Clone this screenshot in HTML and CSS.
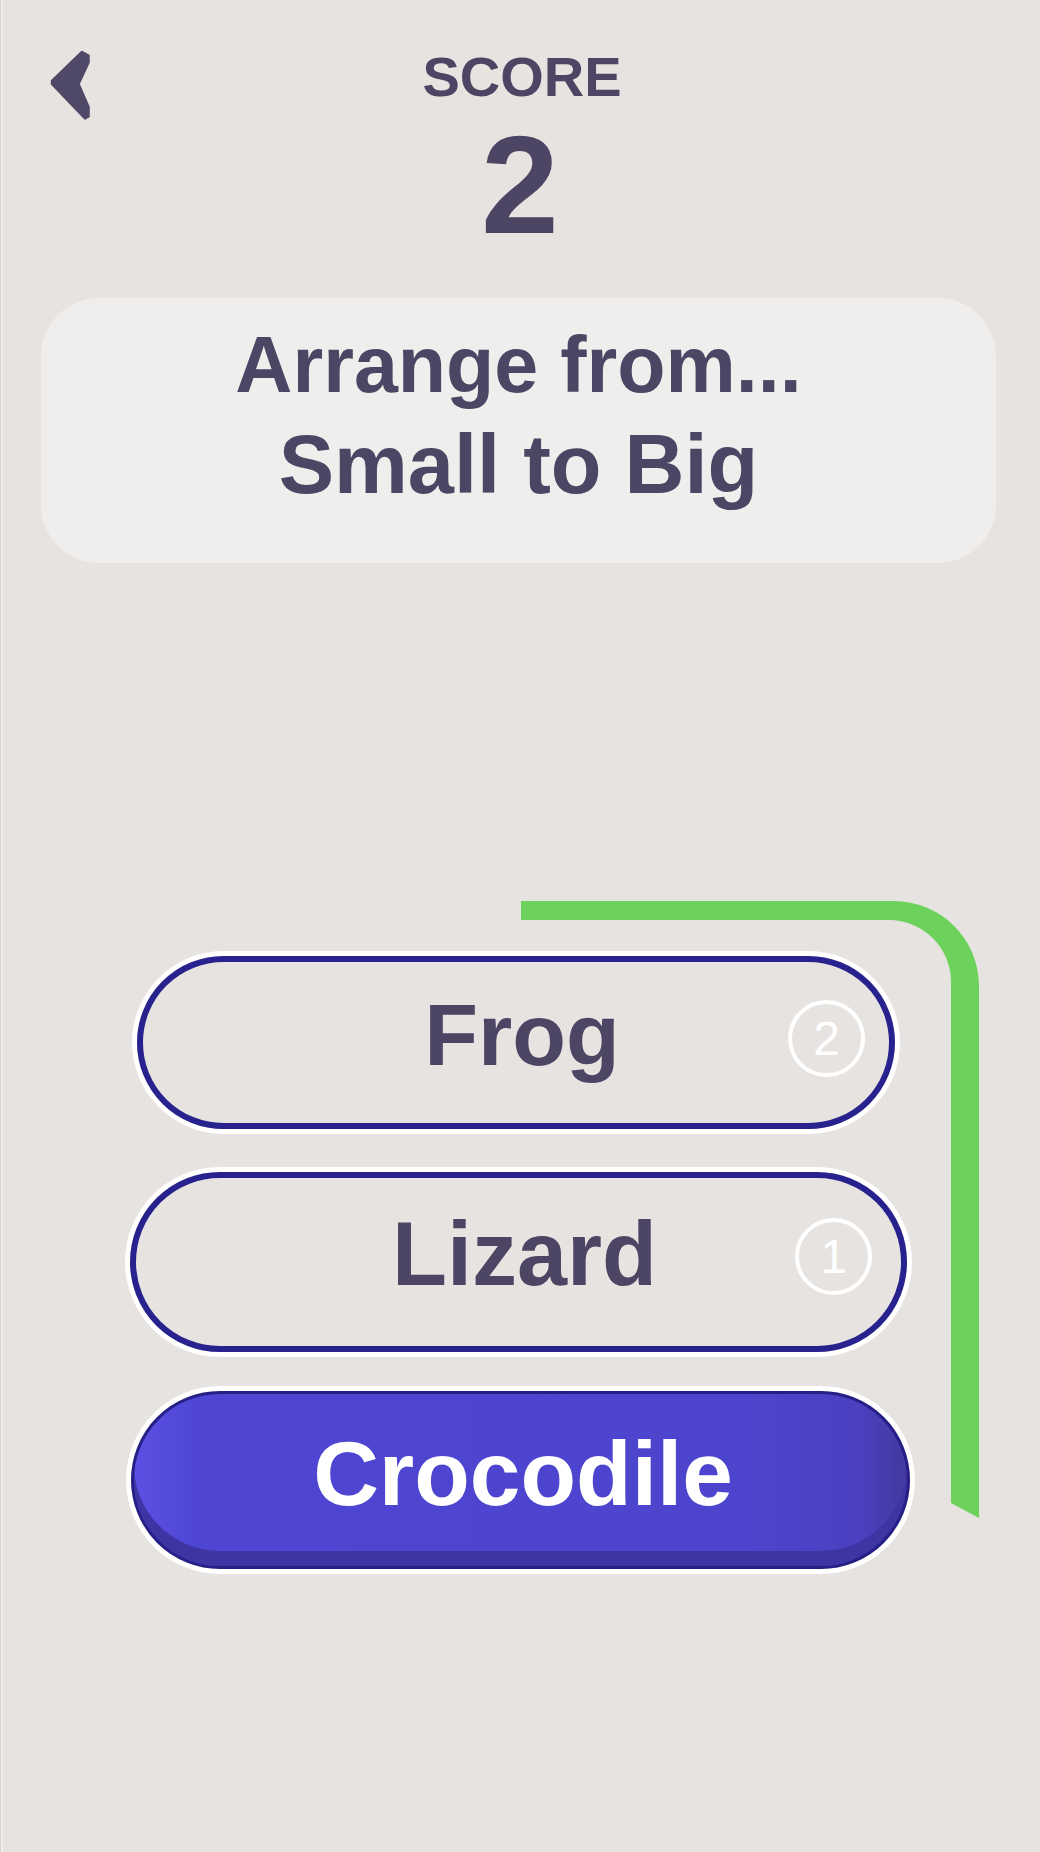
FILE: index.html
```html
<!DOCTYPE html>
<html lang="en">
<head>
<meta charset="utf-8">
<title>Arrange game</title>
<link rel="stylesheet" href="styles.css">
</head>
<body>
<div class="app">
  <header class="topbar">
    <button class="back" aria-label="Back">
      <svg class="back__icon" width="42" height="70" viewBox="-1 -1 42 70">
        <polygon points="32,1 38.5,4.5 38.5,11.5 28.5,33 38.5,56 38.5,65.5 35,67.5 2,33 2,30" fill="#4f4866" stroke="#4f4866" stroke-width="2.5" stroke-linejoin="round"/>
      </svg>
    </button>
    <div class="score">
      <div class="score__label">SCORE</div>
      <div class="score__value">2</div>
    </div>
    <div></div>
  </header>

  <section class="prompt">
    <p class="prompt__text">Arrange from...<br><span class="prompt__line2">Small to Big</span></p>
  </section>

  <section class="board">
    <svg class="board__bracket" width="460" height="620" viewBox="0 0 460 620">
      <path d="M0,1 H373 A85,85 0 0 1 458,86 V618 L430,603 V82 A62,62 0 0 0 368,20 H0 Z" fill="#6dd25c"/>
    </svg>
    <ul class="list">
      <li class="pill pill--outline pill--frog">
        <span class="pill__text">Frog</span>
        <span class="badge">2</span>
      </li>
      <li class="pill pill--outline pill--lizard">
        <span class="pill__text">Lizard</span>
        <span class="badge">1</span>
      </li>
      <li class="pill pill--solid pill--croc">
        <span class="pill__text">Crocodile</span>
      </li>
    </ul>
  </section>
</div>
</body>
</html>
```

FILE: styles.css
```css
* { box-sizing: border-box; }

html, body {
  margin: 0;
  padding: 0;
}

body {
  background: #e7e3e0;
  font-family: "Liberation Sans", Arial, sans-serif;
  color: #4c4564;
}

.app {
  min-height: 1852px;
  padding-top: 49px;
  box-shadow: inset 1px 0 0 #d8d4d1, inset 3px 0 0 #efedeb;
  overflow: hidden;
}

/* header */
.topbar {
  display: grid;
  grid-template-columns: 1fr auto 1fr;
  align-items: start;
}

.back {
  justify-self: start;
  margin: 1px 0 0 49px;
  padding: 0;
  border: 0;
  background: none;
  line-height: 0;
  cursor: pointer;
}

.score {
  text-align: center;
  font-weight: 700;
}

.score__label {
  font-size: 56px;
  line-height: 56px;
  padding-left: 4px;
}

.score__value {
  margin-top: 10px;
  font-size: 140px;
  line-height: 140px;
}

/* prompt card */
.prompt {
  margin: 43px 0 0 41px;
  width: 955px;
  height: 265px;
  padding-top: 17px;
  background: #efeeed;
  border-radius: 58px;
}

.prompt__text {
  margin: 0;
  text-align: center;
  font-weight: 700;
  font-size: 79px;
  line-height: 100px;
}

.prompt__line2 {
  font-size: 83px;
}

/* board */
.board {
  position: relative;
  margin-top: 337px;
}

.board__bracket {
  position: absolute;
  left: 521px;
  top: 0;
}

.list {
  list-style: none;
  margin: 0;
  padding: 56px 0 0 0;
  display: flex;
  flex-direction: column;
  align-items: flex-start;
}

.pill {
  position: relative;
  display: flex;
  align-items: center;
  justify-content: center;
  border-radius: 999px;
  font-weight: 700;
  padding: 0 0 16px 12px;
}

.pill__text { line-height: 1; }

.pill--outline {
  border: 6px solid #28228f;
  box-shadow: 0 0 0 5px #ffffff;
}

.pill--frog {
  margin-left: 137px;
  width: 758px;
  height: 173px;
  font-size: 88px;
}

.pill--lizard {
  margin-top: 43px;
  margin-left: 130px;
  width: 777px;
  height: 180px;
  font-size: 90px;
}

.pill--solid {
  border: 3px solid #261f86;
  background: linear-gradient(90deg, #5a51e4 0%, #4e46d3 8%, #4c44cc 80%, #4a40c0 94%, #43399f 100%);
  box-shadow: 0 0 0 5px #ffffff, inset 0 -15px 0 #3e34a4;
  color: #ffffff;
}

.pill--croc {
  margin-top: 39px;
  margin-left: 131px;
  width: 779px;
  height: 178px;
  font-size: 91px;
  padding: 0 0 14px 5px;
}

.badge {
  position: absolute;
  top: 38px;
  right: 24px;
  width: 77px;
  height: 77px;
  border: 4px solid #ffffff;
  border-radius: 50%;
  display: flex;
  align-items: center;
  justify-content: center;
  color: #ffffff;
  font-weight: 400;
  font-size: 48px;
  line-height: 1;
}

.pill--lizard .badge {
  top: 40px;
  right: 29px;
}
```
